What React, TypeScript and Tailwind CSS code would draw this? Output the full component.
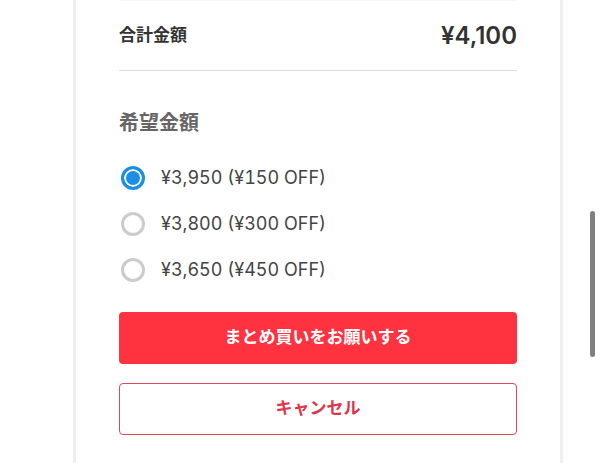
import React, { useState, ChangeEvent, FormEvent } from 'react';

interface PriceOption {
  price: number;
  discount: number;
}

const TOTAL = 4100;

const options: PriceOption[] = [
  { price: 3950, discount: 150 },
  { price: 3800, discount: 300 },
  { price: 3650, discount: 450 },
];

const formatYen = (value: number): string => `¥${value.toLocaleString('en-US')}`;

const App: React.FC = () => {
  const [selectedPrice, setSelectedPrice] = useState<number>(options[0].price);

  const handleChange = (e: ChangeEvent<HTMLInputElement>): void => {
    setSelectedPrice(Number(e.target.value));
  };

  const handleSubmit = (e: FormEvent<HTMLFormElement>): void => {
    e.preventDefault();
  };

  return (
    <div className="min-h-screen bg-white pl-[73px] pr-[37px] font-['Inter','Noto_Sans_CJK_JP',sans-serif] text-[#333333]">
      <form className="min-h-screen border-x-3 border-[#efefef] px-[43px]" onSubmit={handleSubmit}>
        <div className="flex h-[71px] items-center justify-between border-y border-t-[#f6f6f6] border-b-[#dddddd]">
          <span className="text-[17px] font-bold">合計金額</span>
          <span className="text-[24px] font-semibold">{formatYen(TOTAL)}</span>
        </div>

        <fieldset className="pt-9">
          <legend className="contents">
            <span className="block text-[20px] leading-8 font-bold text-[#666666]">希望金額</span>
          </legend>
          <div className="mt-[27px] flex flex-col gap-[22px]">
            {options.map((option) => (
              <label key={option.price} className="flex h-6 cursor-pointer items-center gap-4 pl-0.5">
                <input
                  type="radio"
                  name="price"
                  value={option.price}
                  checked={selectedPrice === option.price}
                  onChange={handleChange}
                  className="size-6 shrink-0 appearance-none rounded-full border-3 border-[#cccccc] bg-white checked:border-[#1b8ee6] checked:bg-[#1b8ee6] checked:shadow-[inset_0_0_0_2px_#ffffff]"
                />
                <span className="text-[18px] leading-6 font-normal tabular-nums text-[#444444]">
                  {formatYen(option.price)} ({formatYen(option.discount)} OFF)
                </span>
              </label>
            ))}
          </div>
        </fieldset>

        <div className="mt-[30px] flex flex-col gap-[19px] pb-7">
          <button type="submit" className="h-[52px] cursor-pointer rounded bg-[#ff333f] text-[17px] font-bold text-white">
            まとめ買いをお願いする
          </button>
          <button type="button" className="h-[52px] cursor-pointer rounded border border-[#dc4a58] text-[17px] font-bold text-[#e0354b]">
            キャンセル
          </button>
        </div>
      </form>

      {/* overlay scroll thumb */}
      <div aria-hidden="true" className="fixed top-[211px] right-[5px] h-[146px] w-[5px] rounded-full bg-[#808080]" />
    </div>
  );
};

export default App;
